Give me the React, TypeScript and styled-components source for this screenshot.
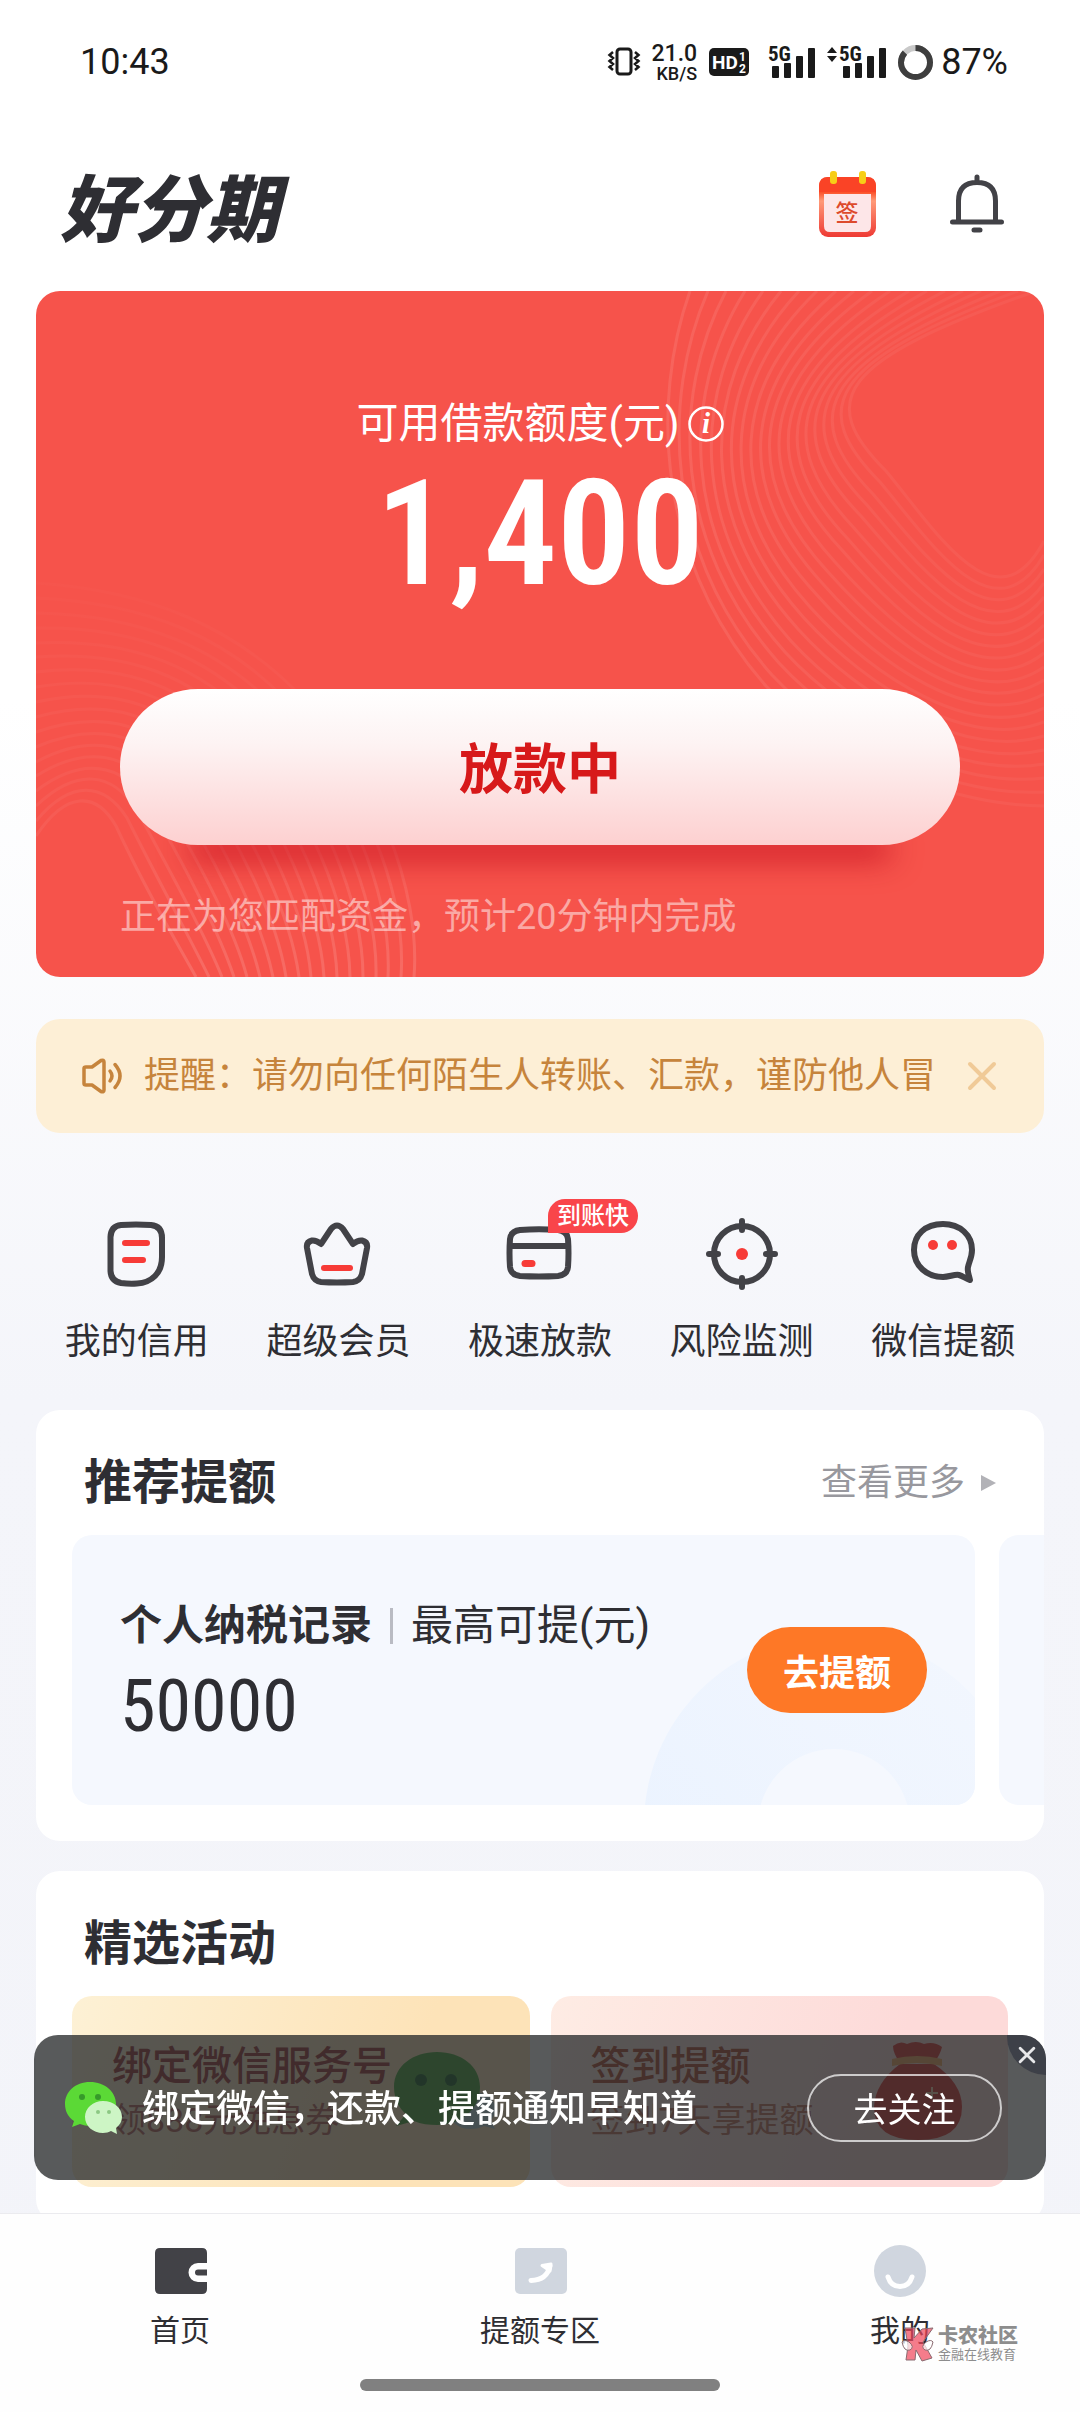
import React from "react";
import styled, { createGlobalStyle } from "styled-components";

const GlobalStyle = createGlobalStyle`
  *, *::before, *::after { box-sizing: border-box; }
  body {
    margin: 0;
    color: #2e2e33;
    background: linear-gradient(#ffffff 0, #ffffff 700px, #f4f5fa 1400px, #f3f4f9 100%);
    font-family: Roboto, "Noto Sans CJK SC", sans-serif;
  }
  button {
    padding: 0;
    border: 0;
    background: none;
    color: inherit;
    font-family: inherit;
    cursor: pointer;
  }
  a { color: inherit; text-decoration: none; }
  h1, h2, h3, p { margin: 0; font-weight: 400; }
  svg { display: block; overflow: visible; }
`;

const Page = styled.div`
  min-height: 100vh;
  overflow: hidden;
`;

/* ---------- system status bar ---------- */

const StatusBar = styled.div`
  display: flex;
  align-items: center;
  justify-content: space-between;
  height: 124px;
  padding: 0 72px 0 80px;
  color: #1a1a1a;
  font-size: 36px;
  line-height: 44px;
`;

const StatusGroup = styled.div`
  display: flex;
  align-items: center;
  gap: 12px;
`;

const NetSpeed = styled.div`
  display: flex;
  flex-direction: column;
  align-items: flex-end;
  padding-top: 4px;
  font-size: 23px;
  font-weight: 500;
  line-height: 20px;
`;

const NetUnit = styled.span`
  font-size: 18px;
`;

const Battery = styled.div`
  display: flex;
  align-items: center;
  gap: 8px;
`;

/* ---------- app header ---------- */

const Header = styled.header`
  display: flex;
  align-items: center;
  justify-content: space-between;
  height: 160px;
  padding: 0 76px 0 60px;
`;

const Brand = styled.h1`
  font-family: "Noto Sans CJK SC", sans-serif;
  font-size: 73px;
  font-style: italic;
  font-weight: 900;
  line-height: 84px;
`;

const HeaderActions = styled.div`
  display: flex;
  align-items: center;
  gap: 74px;
`;

const Main = styled.main`
  padding: 7px 36px 0;
`;

/* ---------- loan card ---------- */

const LoanCard = styled.section`
  position: relative;
  display: flex;
  flex-direction: column;
  padding: 108px 84px 40px;
  border-radius: 24px;
  background: #f6534b;
  color: #fff;
  overflow: hidden;
`;

const CardLines = styled.svg`
  position: absolute;
  inset: 0;
  width: 100%;
  height: 100%;
`;

const LoanLabel = styled.div`
  position: relative;
  display: flex;
  align-items: center;
  justify-content: center;
  gap: 8px;
  font-size: 42px;
  line-height: 50px;
`;

const Amount = styled.p`
  position: relative;
  margin-top: 26px;
  font-family: "Roboto Condensed", Roboto, sans-serif;
  font-size: 146px;
  font-weight: 600;
  line-height: 120px;
  text-align: center;
`;

const LoanButton = styled.button`
  position: relative;
  height: 156px;
  margin-top: 94px;
  padding-bottom: 4px;
  border-radius: 78px;
  background: linear-gradient(#ffffff, #fdf3f3 35%, #fdd0d0);
  box-shadow: 0 82px 30px -68px rgba(200, 20, 34, 0.9);
  color: #d7191a;
  font-size: 54px;
  font-weight: 700;
`;

const LoanNote = styled.p`
  position: relative;
  margin-top: 52px;
  color: rgba(255, 255, 255, 0.5);
  font-size: 36px;
  line-height: 40px;
`;

/* ---------- notice ---------- */

const Notice = styled.div`
  display: flex;
  align-items: center;
  height: 114px;
  margin-top: 42px;
  padding: 0 48px 0 45px;
  border-radius: 24px;
  background: #fdefd6;
  color: #c6843c;
`;

const NoticeText = styled.p`
  flex: 1;
  min-width: 0;
  margin: 0 28px 0 20px;
  overflow: hidden;
  font-size: 36px;
  line-height: 46px;
  white-space: nowrap;
`;

/* ---------- shortcuts ---------- */

const Shortcuts = styled.nav`
  display: grid;
  grid-template-columns: repeat(5, 1fr);
  margin-top: 81px;
`;

const Shortcut = styled.a`
  display: flex;
  flex-direction: column;
  align-items: center;
  gap: 26px;
  font-size: 36px;
  line-height: 44px;
`;

const ShortcutIcon = styled.span`
  position: relative;
`;

const Badge = styled.span`
  position: absolute;
  top: -15px;
  left: 48px;
  padding: 0 9px;
  border-radius: 17px 17px 17px 0;
  background: #f9454a;
  color: #fff;
  font-size: 24px;
  font-weight: 500;
  line-height: 34px;
  white-space: nowrap;
`;

/* ---------- content panels ---------- */

const Panel = styled.section<{ $gap: number }>`
  margin-top: ${(p) => p.$gap}px;
  padding: 43px 0 36px 36px;
  border-radius: 24px;
  background: #fff;
  overflow: hidden;
`;

const PanelHead = styled.div`
  display: flex;
  align-items: center;
  justify-content: space-between;
  height: 60px;
  margin-bottom: 22px;
  padding: 0 48px 0 12px;
`;

const PanelTitle = styled.h2`
  font-size: 48px;
  font-weight: 700;
  line-height: 60px;
`;

const MoreLink = styled.a`
  display: flex;
  align-items: center;
  gap: 16px;
  color: #98989e;
  font-size: 36px;
  line-height: 60px;
`;

const Carousel = styled.div`
  display: flex;
  gap: 24px;
  overflow: hidden;
`;

const Slide = styled.div`
  position: relative;
  display: flex;
  flex: 0 0 calc(100% - 69px);
  align-items: center;
  justify-content: space-between;
  height: 270px;
  padding: 0 48px;
  border-radius: 20px;
  background: #f5f8fe;
  overflow: hidden;
`;

const SlideArt = styled.svg`
  position: absolute;
  right: 0;
  bottom: 0;
`;

const SlideText = styled.div`
  position: relative;
`;

const SlideLine = styled.div`
  display: flex;
  align-items: center;
  font-size: 42px;
  line-height: 56px;
`;

const SlideName = styled.h3`
  font-size: 42px;
  font-weight: 700;
`;

const Divider = styled.span`
  width: 3px;
  height: 36px;
  margin: 0 18px;
  background: #b9bbc3;
`;

const SlideValue = styled.p`
  margin-top: 18px;
  font-family: "Roboto Condensed", Roboto, sans-serif;
  font-size: 72px;
  line-height: 70px;
`;

const RaiseButton = styled.button`
  position: relative;
  width: 180px;
  height: 86px;
  border-radius: 43px;
  background: #fe7826;
  color: #fff;
  font-size: 36px;
  font-weight: 700;
`;

const Activities = styled.div`
  display: grid;
  grid-template-columns: 1fr 1fr;
  gap: 21px;
  padding-right: 36px;
`;

const Activity = styled.a<{ $from: string; $to: string; $ink: string }>`
  display: flex;
  align-items: center;
  height: 191px;
  padding: 0 34px 0 40px;
  border-radius: 20px;
  background: linear-gradient(110deg, ${(p) => p.$from}, ${(p) => p.$to} 70%);
  color: ${(p) => p.$ink};
`;

const ActivityText = styled.div`
  flex: 1;
  min-width: 0;
  white-space: nowrap;
`;

const ActivityTitle = styled.h3`
  font-size: 40px;
  font-weight: 500;
  line-height: 50px;
`;

const ActivityNote = styled.p`
  margin-top: 6px;
  font-size: 34px;
  line-height: 44px;
  opacity: 0.75;
`;

/* ---------- floating prompt ---------- */

const Toast = styled.aside`
  position: fixed;
  right: 34px;
  bottom: 232px;
  left: 34px;
  display: flex;
  align-items: center;
  height: 145px;
  padding: 0 44px 0 30px;
  border-radius: 24px;
  background: rgba(38, 40, 42, 0.77);
  color: #fff;
  overflow: hidden;
`;

const ToastText = styled.p`
  flex: 1;
  margin-left: 20px;
  padding-top: 4px;
  font-size: 37px;
  font-weight: 500;
  line-height: 48px;
`;

const FollowButton = styled.button`
  width: 195px;
  height: 68px;
  border: 2px solid rgba(255, 255, 255, 0.7);
  border-radius: 34px;
  font-size: 34px;
`;

const ToastClose = styled.button`
  position: absolute;
  top: 0;
  right: 0;
  display: grid;
  place-items: center;
  width: 39px;
  height: 40px;
  border-radius: 0 24px 0 40px;
  background: rgba(50, 53, 64, 0.7);
`;

/* ---------- tab bar ---------- */

const TabBar = styled.footer`
  position: fixed;
  right: 0;
  bottom: 0;
  left: 0;
  padding-bottom: 21px;
  border-top: 1px solid #ebebef;
  background: #fefefe;
`;

const Tabs = styled.nav`
  display: grid;
  grid-template-columns: repeat(3, 1fr);
  padding-top: 31px;
`;

const Tab = styled.a`
  display: flex;
  flex-direction: column;
  align-items: center;
  gap: 14px;
  font-size: 30px;
  line-height: 40px;
`;

const HomeIndicator = styled.div`
  width: 360px;
  height: 12px;
  margin: 28px auto 0;
  border-radius: 6px;
  background: #808080;
`;

const Watermark = styled.div`
  position: absolute;
  right: 62px;
  bottom: 49px;
  display: flex;
  align-items: center;
  gap: 4px;
  color: #8d8d8d;
`;

const WatermarkName = styled.strong`
  display: block;
  font-size: 20px;
  font-weight: 900;
  line-height: 22px;
`;

const WatermarkNote = styled.small`
  display: block;
  font-size: 13px;
  line-height: 16px;
`;

/* ---------- drawings ---------- */

const INK = "#424247";
const RED = "#f73b37";

/** Blends two curves point by point into a family of contour lines. */
function contours(a: number[], b: number[], count: number): string[] {
  return Array.from({ length: count }, (_, i) => {
    const t = i / (count - 1);
    const p = a.map((v, k) => Math.round(v + (b[k] - v) * t));
    return `M${p[0]} ${p[1]}C${p.slice(2, 8).join(" ")}C${p.slice(8).join(" ")}`;
  });
}

const RIGHT_LINES = contours(
  [654, 0, 615, 110, 620, 270, 730, 395, 800, 470, 920, 515, 1008, 515],
  [1000, 0, 800, 70, 780, 110, 850, 180, 900, 240, 960, 340, 1008, 250],
  20
);
const LEFT_LINES = contours(
  [0, 292, 120, 300, 200, 340, 260, 400, 340, 480, 385, 600, 378, 686],
  [0, 545, 30, 500, 60, 500, 80, 535, 110, 600, 140, 650, 160, 686],
  18
);

const Contours = () => (
  <CardLines viewBox="0 0 1008 686" preserveAspectRatio="none" aria-hidden="true" fill="none">
    <defs>
      <linearGradient id="fadeRight" gradientUnits="userSpaceOnUse" x1="620" y1="0" x2="1008" y2="0">
        <stop offset="0" stopColor="#fff" stopOpacity="0.1" />
        <stop offset="0.600" stopColor="#fff" stopOpacity="0.05" />
        <stop offset="1" stopColor="#fff" stopOpacity="0.04" />
      </linearGradient>
      <linearGradient id="fadeLeft" gradientUnits="userSpaceOnUse" x1="0" y1="290" x2="0" y2="686">
        <stop offset="0" stopColor="#fff" stopOpacity="0.01" />
        <stop offset="0.600" stopColor="#fff" stopOpacity="0.05" />
        <stop offset="1" stopColor="#fff" stopOpacity="0.14" />
      </linearGradient>
    </defs>
    <g stroke="url(#fadeRight)" strokeWidth="3">
      {RIGHT_LINES.map((d) => <path key={d} d={d} />)}
    </g>
    <g stroke="url(#fadeLeft)" strokeWidth="3">
      {LEFT_LINES.map((d) => <path key={d} d={d} />)}
    </g>
  </CardLines>
);

const VibrateIcon = () => (
  <svg width="32" height="30" viewBox="0 0 32 30" fill="none" stroke="#1a1a1a">
    <rect x="9" y="2" width="14" height="25" rx="3" strokeWidth="3" />
    <path d="M5 5L1.500 8L5 11L1.500 14L5 17L1.500 20L5 23M27 5L30.500 8L27 11L30.500 14L27 17L30.500 20L27 23" strokeWidth="2.500" />
  </svg>
);

const HdIcon = () => (
  <svg width="47" height="28" viewBox="0 0 47 28" fontFamily="Roboto" fontWeight="700" fill="#fff">
    <rect width="40" height="28" rx="5" fill="#1a1a1a" />
    <text x="3" y="21" fontSize="19">HD</text>
    <text x="30" y="13" fontSize="12">1</text>
    <text x="30" y="25" fontSize="12">2</text>
  </svg>
);

const SignalIcon = ({ arrows = false }: { arrows?: boolean }) => (
  <svg width={arrows ? 59 : 47} height="34" viewBox={arrows ? "-12 0 59 34" : "0 0 47 34"} fill="#1a1a1a">
    {arrows && <path d="M-12 8L-7 2L-2 8ZM-12 11L-7 17L-2 11Z" />}
    <text x="0" y="16" fontSize="21" fontWeight="700" fontFamily="Roboto Condensed, Roboto">5G</text>
    <rect x="4" y="21" width="7" height="12" rx="1" />
    <rect x="16" y="18" width="7" height="15" rx="1" />
    <rect x="28" y="11" width="7" height="22" rx="1" />
    <rect x="40" y="3" width="7" height="30" rx="1" />
  </svg>
);

const BatteryRing = () => (
  <svg width="35" height="35" viewBox="0 0 35 35" fill="none" strokeWidth="6">
    <circle cx="17.500" cy="17.500" r="14.500" stroke="#c9c9c9" />
    <circle cx="17.500" cy="17.500" r="14.500" stroke="#3e3e3e" pathLength={100} strokeDasharray="87 13" transform="rotate(-90 17.500 17.500)" />
  </svg>
);

const SignInIcon = () => (
  <svg width="57" height="66" viewBox="0 0 57 66">
    <defs>
      <linearGradient id="cal" x1="0" y1="0" x2="0" y2="1">
        <stop offset="0" stopColor="#f4492d" />
        <stop offset="0.250" stopColor="#fb4f28" />
        <stop offset="0.400" stopColor="#ff9a78" />
        <stop offset="1" stopColor="#ee3a34" />
      </linearGradient>
    </defs>
    <rect y="6" width="57" height="60" rx="9" fill="url(#cal)" />
    <path d="M0 21V15Q0 6 9 6H48Q57 6 57 15V21Z" fill="#fa4326" />
    <path d="M5 23H52V55Q52 61 46 61H11Q5 61 5 55Z" fill="#fde6e8" />
    <rect x="11" y="0" width="7" height="13" rx="3" fill="#f7ce17" />
    <rect x="40" y="0" width="7" height="13" rx="3" fill="#f7ce17" />
    <text x="28" y="50" textAnchor="middle" fontSize="23" fontWeight="500" fontFamily="Noto Sans CJK SC" fill="#dd4a2c">签</text>
  </svg>
);

const BellIcon = () => (
  <svg width="54" height="60" viewBox="0 0 54 60" fill="none" stroke={INK} strokeWidth="5" strokeLinecap="round">
    <path d="M8.500 47V27Q8.500 8.500 27 8.500Q45.500 8.500 45.500 27V47M2.500 48H51.500M27 3V8M24 56H30" />
  </svg>
);

const InfoIcon = () => (
  <svg width="36" height="36" viewBox="0 0 36 36" fill="none">
    <circle cx="18" cy="18" r="16.500" stroke="#fff" strokeWidth="2.500" />
    <text x="18" y="27" textAnchor="middle" fontSize="29" fontStyle="italic" fontWeight="700" fontFamily="Liberation Serif" fill="#fff">i</text>
  </svg>
);

const SpeakerIcon = () => (
  <svg width="43" height="36" viewBox="0 0 43 36" fill="none" stroke="#c6843c" strokeWidth="3.500" strokeLinejoin="round" strokeLinecap="round">
    <path d="M3 10.500Q3 9 5 9H11L20 2.500Q23 1.500 23 4V32Q23 34.500 20 33.500L11 27H5Q3 27 3 25.500Z" />
    <path d="M29 13Q33 18 29 23M34 6.500Q44 18 34 29.500" />
  </svg>
);

const CrossIcon = ({ size, color, weight }: { size: number; color: string; weight: number }) => (
  <svg width={size} height={size} viewBox="0 0 28 28" stroke={color} strokeWidth={weight} strokeLinecap="round">
    <path d="M2 2L26 26M26 2L2 26" />
  </svg>
);

const QuickSvg = ({ children }: { children: React.ReactNode }) => (
  <svg width="80" height="80" viewBox="0 0 80 80" fill="none" stroke={INK} strokeWidth="6" strokeLinejoin="round" strokeLinecap="round">
    {children}
  </svg>
);

const CreditIcon = () => (
  <QuickSvg>
    <path d="M24 11Q39 10 54 11Q65 12 65 24V43Q65 55 58 62Q51 69 40 69.500Q32 70 24 69Q14 67 13.500 57V23Q14 12 24 11Z" />
    <path d="M28 29H50M28 46H46" stroke={RED} />
  </QuickSvg>
);

const CrownIcon = () => (
  <QuickSvg>
    <path d="M9 34Q8 28 14 26.500Q18 26 23 30L33 15Q39 8 45 15L55 30Q60 26 64 26.500Q70 28 69 34L64 60Q62 67 55 68Q39 69 23 68Q16 67 14 60Z" />
    <path d="M26 54H52" stroke={RED} />
  </QuickSvg>
);

const WalletCardIcon = () => (
  <QuickSvg>
    <path d="M20 16Q39 14.500 58 16Q67 17 68 25Q69 39 68 53Q67 61 58 62Q39 63 20 62Q11 61 10 53Q9 39 10 25Q11 17 20 16ZM11 32H67" />
    <path d="M25 49.500H32" stroke={RED} strokeWidth="7" />
  </QuickSvg>
);

const TargetIcon = () => (
  <QuickSvg>
    <circle cx="40" cy="40" r="28" />
    <path d="M40 7V16M40 64V73M7 40H16M64 40H73" />
    <circle cx="40" cy="40" r="6" fill={RED} stroke="none" />
  </QuickSvg>
);

const BubbleIcon = () => (
  <QuickSvg>
    <path d="M40 10C22 10 11 21 11 36C11 52 24 63 40 63C46 63 52 60 56 61C60 62 63 65 67 66C66 61 64 58 65 53C66 48 69 43 69 36C69 21 57 10 40 10Z" />
    <g fill={RED} stroke="none">
      <circle cx="30" cy="31" r="5" />
      <circle cx="49" cy="31" r="5" />
    </g>
  </QuickSvg>
);

const WechatIcon = ({ size }: { size: number }) => (
  <svg width={size} height={size} viewBox="0 0 58 58">
    <path d="M26 3C11 3 1 13 1 25C1 32 4 38 10 42L8 48L16 45C19 46 23 47 26 47C41 47 52 37 52 25C52 13 41 3 26 3Z" fill="#5bd936" />
    <path d="M39 22C29 22 21 29 21 38C21 47 29 54 39 54C42 54 45 53 47 52L53 55L52 49C56 46 58 42 58 38C58 29 50 22 39 22Z" fill="#cdf5c5" />
    <g fill="#36992a">
      <circle cx="18" cy="18" r="3" />
      <circle cx="34" cy="18" r="3" />
    </g>
    <g fill="#8cc884">
      <circle cx="34" cy="33" r="2" />
      <circle cx="45" cy="33" r="2" />
    </g>
  </svg>
);

const ServiceArt = () => (
  <svg width="102" height="102" viewBox="0 0 102 102">
    <path d="M72 50C56 50 54 62 54 70C56 82 66 88 76 88C82 88 86 87 90 85L101 88L97 79C101 74 102 70 101 64C98 54 86 50 72 50Z" fill="#b5d3d8" />
    <path d="M43 11C19 11 0 25 0 46C0 59 6 68 12 73L2 85L20 80C27 83 35 84 43 84C67 84 86 68 86 46C86 25 67 11 43 11Z" fill="#46a63a" />
    <circle cx="27" cy="39" r="6" fill="#17602a" />
    <circle cx="57" cy="39" r="6" fill="#17602a" />
  </svg>
);

const MoneyBag = () => (
  <svg width="102" height="102" viewBox="0 0 102 102">
    <path d="M21 5Q28 -1 35 3Q44 -1 52 3Q62 0 70 6Q68 14 62 22H28Q21 12 21 5Z" fill="#e0352f" />
    <path d="M28 23H62Q90 42 90 66Q90 99 46 99Q2 99 2 66Q3 42 28 23Z" fill="#e23430" />
    <path d="M20 18Q45 12 70 18V25Q45 19 20 25Z" fill="#f5a95e" />
    <path d="M60 46V58M54 52H66" stroke="#ffd9b0" strokeWidth="2" />
  </svg>
);

const HomeTabIcon = () => (
  <svg width="52" height="52" viewBox="0 0 52 52">
    <path d="M6 3H48Q53 3 53 8V18H44A9 9 0 0 0 44 37H53V44Q53 49 48 49H6Q1 49 1 44V8Q1 3 6 3Z" fill={INK} />
    <path d="M53 24.500H44A3 3 0 0 0 44 30.500H53Z" fill={INK} />
  </svg>
);

const RaiseTabIcon = () => (
  <svg width="52" height="52" viewBox="0 0 52 52" fill="none">
    <rect x="1" y="3" width="52" height="46" rx="5" fill="#d0d6df" />
    <path d="M17 35.500Q33 35 36 21" stroke="#fff" strokeWidth="5" strokeLinecap="round" />
    <path d="M28 20.500L37 19L36 26Z" fill="#fff" stroke="#fff" strokeWidth="3" strokeLinejoin="round" />
  </svg>
);

const MineTabIcon = () => (
  <svg width="52" height="52" viewBox="0 0 52 52" fill="none">
    <circle cx="26" cy="26" r="26" fill="#d0d6df" />
    <path d="M14 32Q17 41.500 26 41.500Q35 41.500 38 32" stroke="#fff" strokeWidth="5" strokeLinecap="round" />
  </svg>
);

const WatermarkLogo = () => (
  <svg width="32" height="34" viewBox="0 0 32 34" fill="#f0455a" fillOpacity="0.7" stroke="#8a6a70" strokeWidth="1">
    <path d="M3 1H13L12 11L20 2L31 1L21 15L30 31L20 34L14 23L13 33H4L6 19Z" />
    <path d="M0 15Q2 12 7 15Q13 20 8 23Q2 25 0 15ZM31 15Q29 12 24 15Q18 20 23 23Q29 25 31 15Z" fill="#fff" />
  </svg>
);

/* ---------- screen ---------- */

const SHORTCUTS = [
  { label: "我的信用", icon: <CreditIcon /> },
  { label: "超级会员", icon: <CrownIcon /> },
  { label: "极速放款", icon: <WalletCardIcon />, badge: "到账快" },
  { label: "风险监测", icon: <TargetIcon /> },
  { label: "微信提额", icon: <BubbleIcon /> },
];

const TABS = [
  { label: "首页", icon: <HomeTabIcon /> },
  { label: "提额专区", icon: <RaiseTabIcon /> },
  { label: "我的", icon: <MineTabIcon /> },
];

export default function App() {
  return (
    <Page>
      <GlobalStyle />
      <StatusBar>
        <span>10:43</span>
        <StatusGroup>
          <VibrateIcon />
          <NetSpeed>
            <span>21.0</span>
            <NetUnit>KB/S</NetUnit>
          </NetSpeed>
          <HdIcon />
          <SignalIcon />
          <SignalIcon arrows />
          <Battery>
            <BatteryRing />
            <span>87%</span>
          </Battery>
        </StatusGroup>
      </StatusBar>

      <Header>
        <Brand>好分期</Brand>
        <HeaderActions>
          <button type="button" aria-label="签到"><SignInIcon /></button>
          <button type="button" aria-label="消息"><BellIcon /></button>
        </HeaderActions>
      </Header>

      <Main>
        <LoanCard>
          <Contours />
          <LoanLabel>
            可用借款额度(元)
            <button type="button" aria-label="额度说明"><InfoIcon /></button>
          </LoanLabel>
          <Amount>1,400</Amount>
          <LoanButton type="button">放款中</LoanButton>
          <LoanNote>正在为您匹配资金，预计20分钟内完成</LoanNote>
        </LoanCard>

        <Notice>
          <SpeakerIcon />
          <NoticeText>提醒：请勿向任何陌生人转账、汇款，谨防他人冒</NoticeText>
          <button type="button" aria-label="关闭提醒">
            <CrossIcon size={28} color="#f0ca97" weight={4} />
          </button>
        </Notice>

        <Shortcuts>
          {SHORTCUTS.map((s) => (
            <Shortcut key={s.label} href="#">
              <ShortcutIcon>
                {s.icon}
                {s.badge && <Badge>{s.badge}</Badge>}
              </ShortcutIcon>
              {s.label}
            </Shortcut>
          ))}
        </Shortcuts>

        <Panel $gap={46}>
          <PanelHead>
            <PanelTitle>推荐提额</PanelTitle>
            <MoreLink href="#">
              查看更多
              <svg width="15" height="16" viewBox="0 0 15 16"><path d="M0 0L15 8L0 16Z" fill="#b2b2b7" /></svg>
            </MoreLink>
          </PanelHead>
          <Carousel>
            <Slide>
              <SlideArt width="330" height="170" viewBox="0 0 330 170" aria-hidden="true">
                <defs>
                  <linearGradient id="arc" x1="0" y1="1" x2="1" y2="0">
                    <stop offset="0" stopColor="#e9f2ff" />
                    <stop offset="1" stopColor="#f3f7fe" />
                  </linearGradient>
                </defs>
                <circle cx="189" cy="190" r="190" fill="url(#arc)" />
                <circle cx="189" cy="190" r="76" fill="#f5f8fe" />
              </SlideArt>
              <SlideText>
                <SlideLine>
                  <SlideName>个人纳税记录</SlideName>
                  <Divider />
                  最高可提(元)
                </SlideLine>
                <SlideValue>50000</SlideValue>
              </SlideText>
              <RaiseButton type="button">去提额</RaiseButton>
            </Slide>
            <Slide />
          </Carousel>
        </Panel>

        <Panel $gap={30}>
          <PanelHead>
            <PanelTitle>精选活动</PanelTitle>
          </PanelHead>
          <Activities>
            <Activity href="#" $from="#fdf1d5" $to="#fde3b8" $ink="#9c3434">
              <ActivityText>
                <ActivityTitle>绑定微信服务号</ActivityTitle>
                <ActivityNote>领888元免息券</ActivityNote>
              </ActivityText>
              <ServiceArt />
            </Activity>
            <Activity href="#" $from="#feece4" $to="#fddad9" $ink="#b04a32">
              <ActivityText>
                <ActivityTitle>签到提额</ActivityTitle>
                <ActivityNote>签到7天享提额</ActivityNote>
              </ActivityText>
              <MoneyBag />
            </Activity>
          </Activities>
        </Panel>
      </Main>

      <Toast>
        <WechatIcon size={58} />
        <ToastText>绑定微信，还款、提额通知早知道</ToastText>
        <FollowButton type="button">去关注</FollowButton>
        <ToastClose type="button" aria-label="关闭">
          <CrossIcon size={16} color="#e8e8ea" weight={5} />
        </ToastClose>
      </Toast>

      <TabBar>
        <Tabs>
          {TABS.map((t) => (
            <Tab key={t.label} href="#">
              {t.icon}
              {t.label}
            </Tab>
          ))}
        </Tabs>
        <HomeIndicator />
        <Watermark>
          <WatermarkLogo />
          <div>
            <WatermarkName>卡农社区</WatermarkName>
            <WatermarkNote>金融在线教育</WatermarkNote>
          </div>
        </Watermark>
      </TabBar>
    </Page>
  );
}
